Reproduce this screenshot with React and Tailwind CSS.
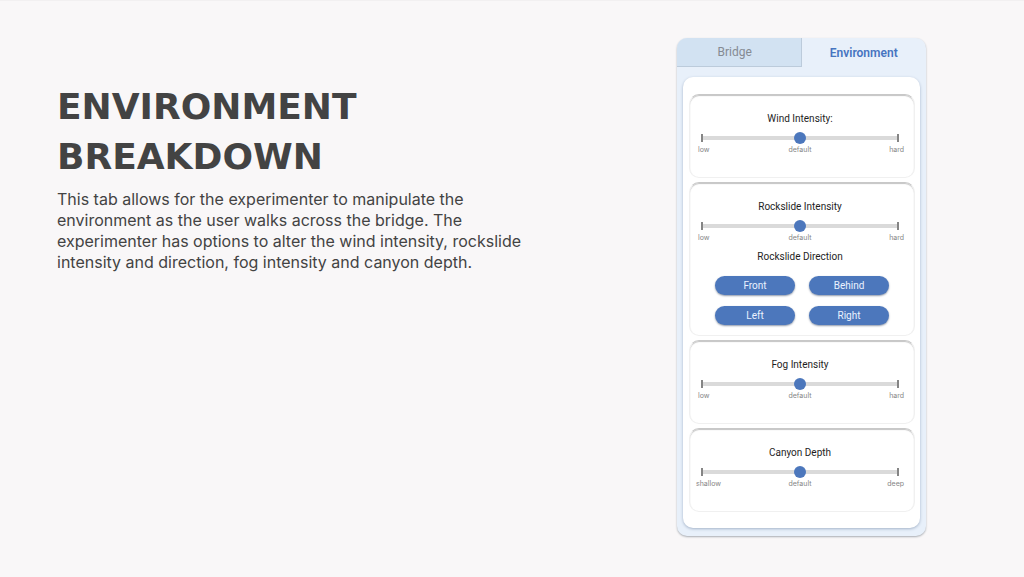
import { useState } from "react";

const RANGE =
  "block h-3 min-w-0 flex-1 cursor-pointer appearance-none bg-transparent outline-none " +
  "[&::-webkit-slider-runnable-track]:h-1 [&::-webkit-slider-runnable-track]:bg-[#dadada] " +
  "[&::-webkit-slider-thumb]:-mt-1 [&::-webkit-slider-thumb]:size-3 [&::-webkit-slider-thumb]:appearance-none " +
  "[&::-webkit-slider-thumb]:rounded-full [&::-webkit-slider-thumb]:bg-[#4c77bc] " +
  "[&::-moz-range-track]:h-1 [&::-moz-range-track]:bg-[#dadada] [&::-moz-range-thumb]:size-3 " +
  "[&::-moz-range-thumb]:border-0 [&::-moz-range-thumb]:bg-[#4c77bc]";

function Card({ id, title, low = "low", high = "hard", children }) {
  return (
    <section className="rounded-[10px] border border-[#f0f0f0] border-t-[#c8c8c8] bg-white pt-[17px] pr-[10px] pb-4 pl-[6px] shadow-[inset_0_1px_1px_#c4c4c4]">
      <label
        htmlFor={id}
        className="block text-center font-['Roboto',sans-serif] text-[10px] leading-[14px] text-[#1e1e1e]"
      >
        {title}
      </label>
      <div className="mx-[5px] mt-[6px] flex items-center">
        <span className="h-2 w-[2px] bg-[#858585]" />
        <input id={id} type="range" min="0" max="100" defaultValue="50" className={RANGE} />
        <span className="h-2 w-[2px] bg-[#858585]" />
      </div>
      <div className="grid grid-cols-3 text-[7px] leading-[12px] text-[#858585]">
        <span className={low === "low" ? "pl-[2px]" : ""}>{low}</span>
        <span className="text-center">default</span>
        <span className="text-right">{high}</span>
      </div>
      {children}
    </section>
  );
}

function DirectionButton({ children }) {
  return (
    <button
      type="button"
      className="h-[19px] rounded-full bg-[#4c77bc] font-['Roboto',sans-serif] text-[10px] leading-[19px] text-[#eaf2ff] shadow-[0_1px_2px_#8f99aa]"
    >
      {children}
    </button>
  );
}

function ControlPanel() {
  const [tab, setTab] = useState("Environment");
  return (
    <aside className="w-[249px] shrink-0 overflow-hidden rounded-[10px] bg-[#e8f0fa] shadow-[0_1px_2px_#a9adb3]">
      <div role="tablist" className="grid grid-cols-2 font-['Roboto',sans-serif] text-[12px]">
        {["Bridge", "Environment"].map((name) => (
          <button
            key={name}
            type="button"
            role="tab"
            aria-selected={tab === name}
            onClick={() => setTab(name)}
            className={
              tab === name
                ? "h-[29px] font-semibold text-[#4674c0]"
                : "h-[29px] border-r border-b border-[#bccbdb] bg-[#d2e2f2] pr-2 text-[#858b93]"
            }
          >
            {name}
          </button>
        ))}
      </div>
      <div className="mx-[6px] mt-[10px] mb-2 flex flex-col gap-[4px] rounded-[10px] bg-white pr-[5px] pl-[6px] pt-[17px] pb-4 shadow-[0_1px_3px_#a3b2c8]">
        <Card id="wind" title="Wind Intensity:">
          <div className="h-[5px]" />
        </Card>
        <Card id="rockslide" title="Rockslide Intensity">
          <fieldset className="-mb-[6px] pt-[6px]">
            <legend className="float-left w-full text-center font-['Roboto',sans-serif] text-[10px] leading-[14px] text-[#1e1e1e]">
              Rockslide Direction
            </legend>
            <div className="clear-both grid grid-cols-[80px_80px] justify-center gap-x-[14px] gap-y-[11px] pt-3 pl-1">
              <DirectionButton>Front</DirectionButton>
              <DirectionButton>Behind</DirectionButton>
              <DirectionButton>Left</DirectionButton>
              <DirectionButton>Right</DirectionButton>
            </div>
          </fieldset>
        </Card>
        <Card id="fog" title="Fog Intensity">
          <div className="h-[5px]" />
        </Card>
        <Card id="canyon" title="Canyon Depth" low="shallow" high="deep">
          <div className="h-[5px]" />
        </Card>
      </div>
    </aside>
  );
}

export default function App() {
  return (
    <main className="flex min-h-screen items-start justify-between gap-8 border-t border-[#f2f0f1] bg-[#f9f7f8] pt-[37px] pr-[98px] pb-10 pl-[57px] font-['Inter',sans-serif]">
      <div className="max-w-[500px] pt-11 text-[#434343]">
        <h1 className="font-['DejaVu_Sans',sans-serif] text-[36px] leading-[50px] font-bold">
          ENVIRONMENT
          <br />
          BREAKDOWN
        </h1>
        <p className="mt-[7px] text-[16px] leading-[21px]">
          This tab allows for the experimenter to manipulate the
          <br />
          environment as the user walks across the bridge. The
          <br />
          experimenter has options to alter the wind intensity, rockslide
          <br />
          intensity and direction, fog intensity and canyon depth.
        </p>
      </div>
      <ControlPanel />
    </main>
  );
}
